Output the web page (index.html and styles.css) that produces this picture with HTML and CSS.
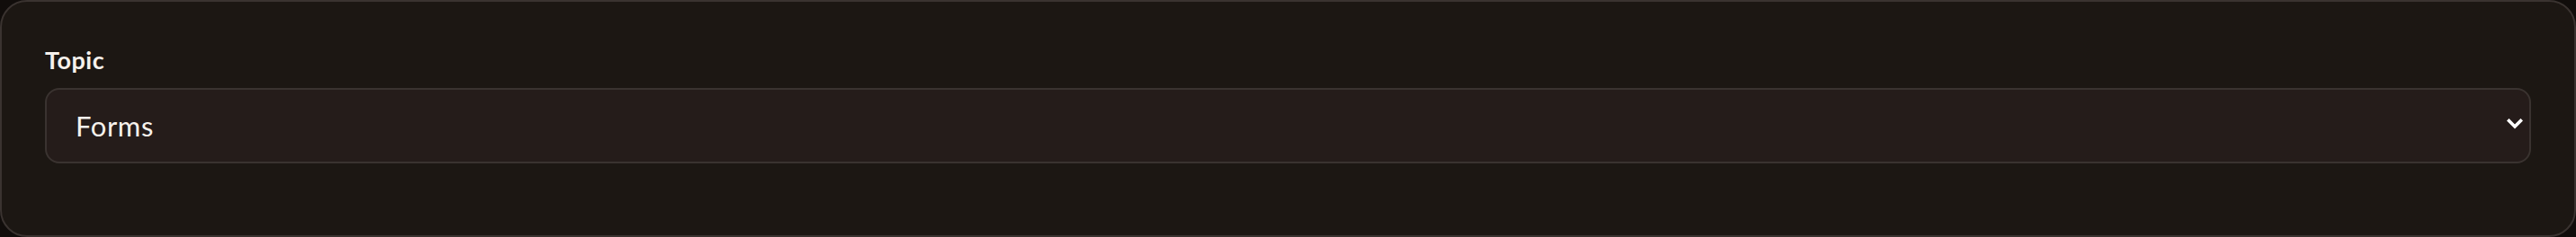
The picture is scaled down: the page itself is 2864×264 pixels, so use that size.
FILE: index.html
```html
<!DOCTYPE html>
<html lang="en">
<head>
<meta charset="utf-8">
<title>Topic</title>
<link rel="stylesheet" href="styles.css">
</head>
<body>
<div class="card">
  <label class="field-label" for="topic">Topic</label>
  <div class="select-wrap">
    <select id="topic" class="select">
      <option>Forms</option>
      <option>Buttons</option>
      <option>Layout</option>
    </select>
    <svg class="chevron" width="18" height="12" viewBox="0 0 18 12" aria-hidden="true">
      <path d="M2.5 2.5 L9 9 L15.5 2.5" fill="none" stroke="#ffffff" stroke-width="3.6" stroke-linecap="square" stroke-linejoin="miter"/>
    </svg>
  </div>
</div>
</body>
</html>
```
FILE: styles.css
```css
html, body {
  margin: 0;
  padding: 0;
  background: #110d0b;
}
body {
  width: 2864px;
  height: 264px;
  font-family: Lato, "Noto Sans", sans-serif;
}
.card {
  box-sizing: border-box;
  width: 2864px;
  height: 264px;
  background: #1c1713;
  border: 2px solid #3a3330;
  border-radius: 30px;
  padding: 49px 48px 0 48px;
  display: flex;
  flex-direction: column;
  gap: 15px;
}
.field-label {
  display: block;
  font-size: 27px;
  line-height: 32px;
  font-weight: 700;
  letter-spacing: 0.5px;
  color: #f6f1ec;
}
.select-wrap {
  position: relative;
  width: 100%;
}
.select {
  appearance: none;
  -webkit-appearance: none;
  box-sizing: border-box;
  width: 100%;
  height: 84px;
  margin: 0;
  background: #251c1a;
  border: 2px solid #3a3330;
  border-radius: 16px;
  padding: 0 60px 0 32px;
  font-family: Lato, "Noto Sans", sans-serif;
  font-size: 31px;
  letter-spacing: 0.6px;
  color: #f6f1ec;
  outline: none;
}
.chevron {
  position: absolute;
  right: 9px;
  top: 34px;
  pointer-events: none;
}
```
